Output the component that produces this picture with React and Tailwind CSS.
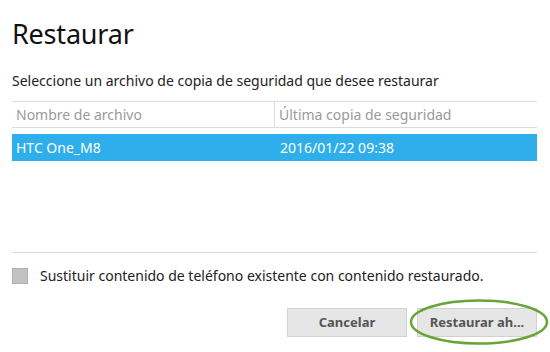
export default function App() {
  return (
    <div className="w-[550px] h-[352px] bg-white overflow-hidden font-['Noto_Sans','Open_Sans',sans-serif] text-[#1a1a1a]">
      <div className="pl-[12px] pr-[13px] pt-[14px]">
        {/* TITLE */}
        <h1 className="text-[27px] leading-[40px] font-normal tracking-[-0.2px] text-[#111]">Restaurar</h1>

        {/* SUBTITLE */}
        <p className="mt-[17px] text-[14px] leading-[20px] text-[#222]">
          Seleccione un archivo de copia de seguridad que desee restaurar
        </p>

        {/* TABLE */}
        <div className="mt-[10px] h-[152px] border-t border-b border-[#dcdcdc] flex flex-col">
          <div className="flex h-[26px] border-b border-[#dcdcdc] text-[14px] text-[#9a9a9a]">
            <div className="w-[263px] pl-[4px] flex items-center border-r border-[#dcdcdc]">Nombre de archivo</div>
            <div className="flex-1 pl-[4px] flex items-center">Última copia de seguridad</div>
          </div>
          <div className="mt-[6px] flex h-[27px] bg-[#2eaeea] text-white text-[14px]">
            <div className="w-[264px] pl-[4px] flex items-center">HTC One_M8</div>
            <div className="flex-1 pl-[4px] flex items-center">2016/01/22 09:38</div>
          </div>
        </div>

        {/* CHECKBOX */}
        <label className="mt-[12px] flex items-center gap-[12px] text-[14px] text-[#222]">
          <span className="w-[16px] h-[16px] bg-[#c2c2c2] border border-[#b0b0b0]" />
          Sustituir contenido de teléfono existente con contenido restaurado.
        </label>

        {/* BUTTONS */}
        <div className="mt-[22px] flex justify-end gap-[10px]">
          <button className="w-[120px] h-[29px] bg-[#e6e6e6] border border-[#d2d2d2] text-[13px] font-bold text-[#555]">
            Cancelar
          </button>
          <div className="relative">
            <button className="w-[120px] h-[29px] bg-[#e6e6e6] border border-[#d2d2d2] text-[13px] font-bold text-[#555]">
              Restaurar ah...
            </button>
            <svg className="absolute left-[-8px] top-[-9px] pointer-events-none" width="140" height="46" viewBox="0 0 140 46">
              <ellipse cx="70" cy="23" rx="68" ry="21.5" fill="none" stroke="#67a536" strokeWidth="2.5" />
            </svg>
          </div>
        </div>
      </div>
    </div>
  );
}
